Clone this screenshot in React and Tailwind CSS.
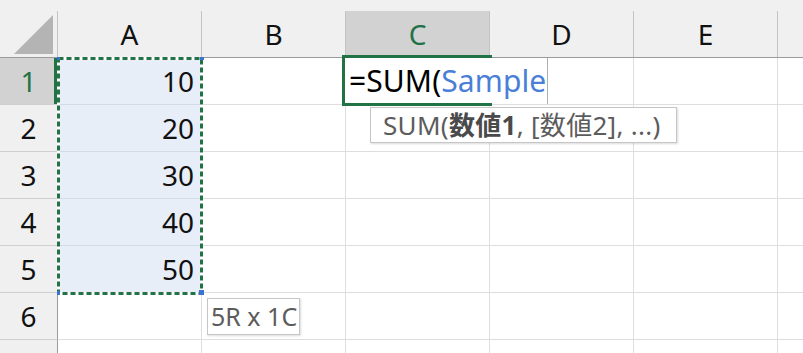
const columns = ['A', 'B', 'C', 'D', 'E', 'F'];
const rows = [1, 2, 3, 4, 5, 6, 7];
const values = { 1: '10', 2: '20', 3: '30', 4: '40', 5: '50' };

const HeaderCell = ({ label, active, last }) => (
  <div className={`flex h-[57px] shrink-0 flex-col ${last ? 'w-[60px]' : 'w-[144px]'}`}>
    <div className="h-[11px]" />
    <div
      className={`flex flex-1 items-center justify-center border-r border-[#c4c4c4] text-[28px] leading-none ${
        active ? 'bg-[#d2d2d2] text-[#217346]' : 'text-[#111]'
      }`}
    >
      {label}
    </div>
  </div>
);

const Row = ({ n }) => {
  const inRange = values[n] !== undefined;
  return (
    <div className="flex h-[47px]">
      <div
        className={`flex w-[58px] shrink-0 items-center justify-center border-b border-r border-b-[#cfcfcf] border-r-[#9b9b9b] text-[28px] leading-none ${
          n === 1 ? 'bg-[#d2d2d2] text-[#217346]' : 'bg-[#f0f0f0] text-[#111]'
        }`}
      >
        {n}
      </div>
      {columns.map((col) => (
        <div
          key={col}
          className={`flex shrink-0 items-center justify-end border-b border-r pr-[7px] text-[28px] leading-none text-[#111] ${
            col === 'F' ? 'w-[60px]' : 'w-[144px]'
          } ${
            col === 'A' && inRange ? 'border-[#d3dbe6] bg-[#e8eef8]' : 'border-[#dedede] bg-white'
          }`}
        >
          {col === 'A' && inRange ? values[n] : ''}
        </div>
      ))}
    </div>
  );
};

const App = () => {
  return (
    <div className="relative h-[353px] w-[803px] overflow-hidden bg-white font-['Noto_Sans','Noto_Sans_CJK_JP',sans-serif]">
      {/* column headers */}
      <div className="flex h-[58px] border-b border-[#9b9b9b] bg-[#f0f0f0]">
        <div className="flex h-[57px] w-[58px] shrink-0 flex-col">
          <div className="h-[11px]" />
          <div className="flex-1 border-r border-[#c4c4c4]">
            <svg width="57" height="46" viewBox="0 0 57 46">
              <polygon points="53,4 53,43 14,43" fill="#b4b4b4" />
            </svg>
          </div>
        </div>
        {columns.map((col, i) => (
          <HeaderCell key={col} label={col === 'F' ? '' : col} active={col === 'C'} last={i === columns.length - 1} />
        ))}
      </div>

      {rows.map((n) => (
        <Row key={n} n={n} />
      ))}

      {/* active row indicator */}
      <div className="absolute left-[54px] top-[58px] h-[46px] w-[3px] bg-[#217346]" />

      {/* copy marquee around A1:A5 */}
      <svg className="absolute left-[55px] top-[55px]" width="150" height="242" viewBox="0 0 150 242">
        <rect x="3.5" y="3.5" width="143" height="235" fill="none" stroke="#ffffff" strokeWidth="3" />
        <rect x="3.5" y="3.5" width="143" height="235" fill="none" stroke="#217346" strokeWidth="3" strokeDasharray="5 3" />
        <rect x="2" y="2" width="3" height="3" fill="#3c73d3" />
        <rect x="145" y="2" width="4" height="3" fill="#3c73d3" />
        <rect x="2" y="236" width="3" height="4" fill="#3c73d3" />
        <rect x="144" y="235" width="5" height="5" fill="#3c73d3" />
      </svg>

      {/* in-cell editor on C1 */}
      <div className="absolute left-[345px] top-[58px] flex h-[46px] w-[203px] items-center whitespace-nowrap border-r border-[#b0b0b0] bg-white pl-[4px] text-[30px] leading-none tracking-[0.1px]">
        <span className="text-black">=SUM(</span>
        <span className="text-[#4a7fd8]">Sample</span>
      </div>
      <div className="pointer-events-none absolute left-[342px] top-[55px] h-[51px] w-[150px] border-[3px] border-r-0 border-[#217346]" />

      {/* function hint */}
      <div className="absolute left-[370px] top-[107px] flex h-[36px] w-[307px] items-center whitespace-nowrap border border-[#c6c6c6] bg-white pl-[12px] text-[26px] leading-none tracking-[0.3px] text-[#5c5c5c] shadow-[1px_1px_2px_rgba(0,0,0,0.15)]">
        SUM(<span className="font-bold text-[#4a4a4a]">数値1</span>, [数値2], ...)
      </div>

      {/* selection size */}
      <div className="absolute left-[207px] top-[298px] flex h-[37px] w-[93px] items-center whitespace-nowrap border border-[#c6c6c6] bg-white pl-[3px] text-[25px] leading-none text-[#5c5c5c] shadow-[1px_1px_2px_rgba(0,0,0,0.15)]">
        5R x 1C
      </div>
    </div>
  );
};

export default App;
